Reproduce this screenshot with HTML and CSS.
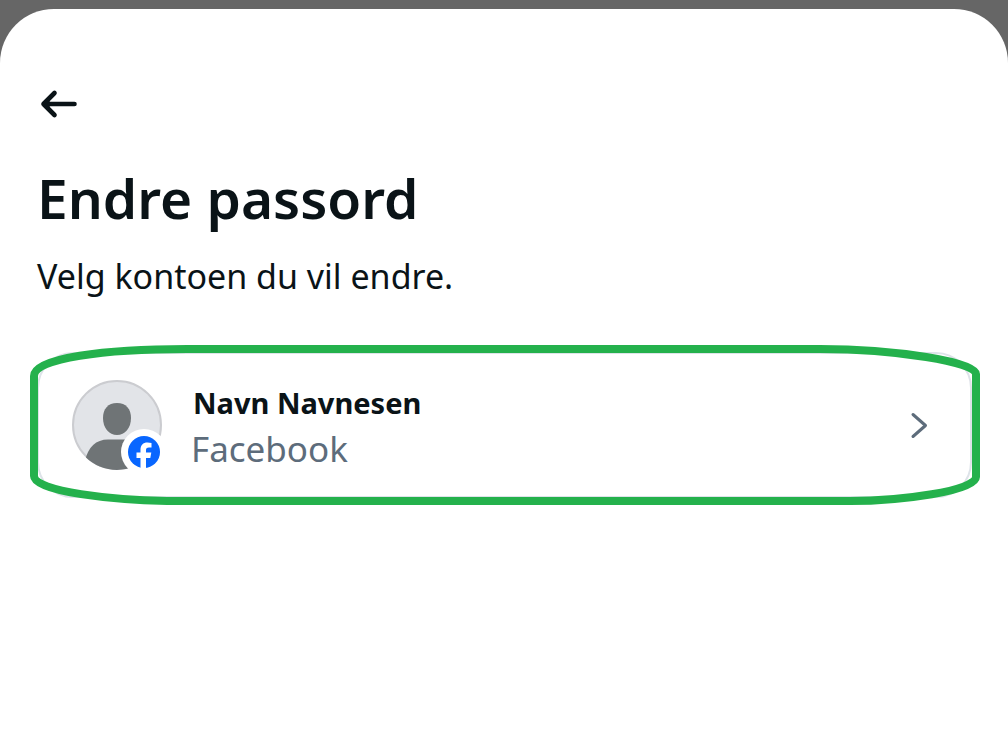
FILE: index.html
```html
<!DOCTYPE html>
<html lang="nb">
<head>
<meta charset="utf-8">
<meta name="viewport" content="width=device-width, initial-scale=1">
<title>Endre passord</title>
<link rel="stylesheet" href="styles.css">
</head>
<body>
<main class="sheet">
  <button class="back" type="button" aria-label="Tilbake">
    <svg width="40" height="32" viewBox="0 0 40 32" fill="none" stroke="currentColor" stroke-width="4.6" stroke-linecap="round" stroke-linejoin="round" aria-hidden="true">
      <path d="M36.500 16H5.500M16.500 5L5.500 16L16.500 27M9.500 13.500L7 16L9.500 18.500Z"/>
    </svg>
  </button>
  <h1 class="title">Endre passord</h1>
  <p class="intro">Velg kontoen du vil endre.</p>
  <div class="choice">
    <button class="account" type="button">
      <svg class="avatar" width="92" height="92" viewBox="0 0 92 92" aria-hidden="true">
        <defs><clipPath id="face"><circle cx="46" cy="46" r="45"/></clipPath></defs>
        <circle cx="46" cy="46" r="44" fill="#e2e4e8" stroke="#cbccd0" stroke-width="2"/>
        <g clip-path="url(#face)" fill="#6f7476">
          <path d="M46 24C55 24 60 30 60 39C60 49 54 56 46 56C38 56 32 49 32 39C32 30 37 24 46 24Z"/>
          <path d="M14 82C17 68 25 60.500 37 60.500H56C68 60.500 76 68 79 92H14Z"/>
        </g>
        <circle cx="73" cy="73" r="23" fill="#fff"/>
        <circle cx="73" cy="73" r="16" fill="#0866ff"/>
        <path fill="#fff" d="M69.500 89V79H65.500V73.500H69.500V71C69.500 66 72 63.500 76.500 63.500C78 63.500 79.500 63.700 80.500 64V68.500H78C75.700 68.500 75 69.500 75 71.200V73.500H80.300L79.300 79H75V89Z"/>
      </svg>
      <span class="labels">
        <span class="name">Navn Navnesen</span>
        <span class="service">Facebook</span>
      </span>
      <svg class="chevron" width="20" height="28" viewBox="0 0 20 28" fill="none" stroke="currentColor" stroke-width="3" stroke-linecap="round" stroke-linejoin="round" aria-hidden="true">
        <path d="M3 3.500L15.500 14.500L3 25.500"/>
      </svg>
    </button>
    <svg class="marker" viewBox="0 0 950 160" preserveAspectRatio="none" fill="none" stroke="#24b14c" stroke-width="8" stroke-linejoin="round" aria-hidden="true">
      <path d="M4 31C4 13 75 4 157 4H790C865 4 946 17 946 29V132C946 146 870 156 820 156H137C85 155 4 147 4 131Z"/>
    </svg>
  </div>
</main>
</body>
</html>
```
FILE: styles.css
```css
* {
  box-sizing: border-box;
}

body {
  margin: 0;
  padding-top: 9px;
  min-height: 100vh;
  display: flex;
  background: #666;
  color: #0a1317;
  font-family: "Noto Sans", sans-serif;
}

button {
  margin: 0;
  border: 0;
  background: none;
  color: inherit;
  font: inherit;
  cursor: pointer;
}

.sheet {
  flex: 1;
  display: flex;
  flex-direction: column;
  padding: 79px 36px 36px 37px;
  border-radius: 54px 54px 0 0;
  background: #fff;
}

.back {
  align-self: flex-start;
  padding: 0;
  margin-left: 1px;
}

.back svg {
  display: block;
}

.title {
  margin: 42px 0 0;
  font-size: 55px;
  font-weight: 600;
  line-height: 72px;
}

.intro {
  margin: 20px 0 0;
  font-size: 34px;
  line-height: 44px;
}

.choice {
  position: relative;
  margin-top: 54px;
}

.account {
  width: 100%;
  display: flex;
  align-items: center;
  gap: 28px;
  padding: 20px 40px 20px 32px;
  min-height: 146px;
  border: 2px solid #dee3e9;
  border-radius: 36px;
  text-align: left;
}

.avatar,
.chevron {
  flex: none;
}

.chevron {
  color: #5d6c7b;
}

.labels {
  flex: 1;
  display: flex;
  flex-direction: column;
  padding-top: 4px;
}

.name {
  padding-left: 2px;
  font-size: 29px;
  font-weight: 700;
  line-height: 44px;
}

.service {
  color: #5d6c7b;
  font-size: 35px;
  line-height: 48px;
}

.marker {
  position: absolute;
  top: -7px;
  left: -7px;
  width: calc(100% + 15px);
  height: calc(100% + 14px);
  pointer-events: none;
}
```
